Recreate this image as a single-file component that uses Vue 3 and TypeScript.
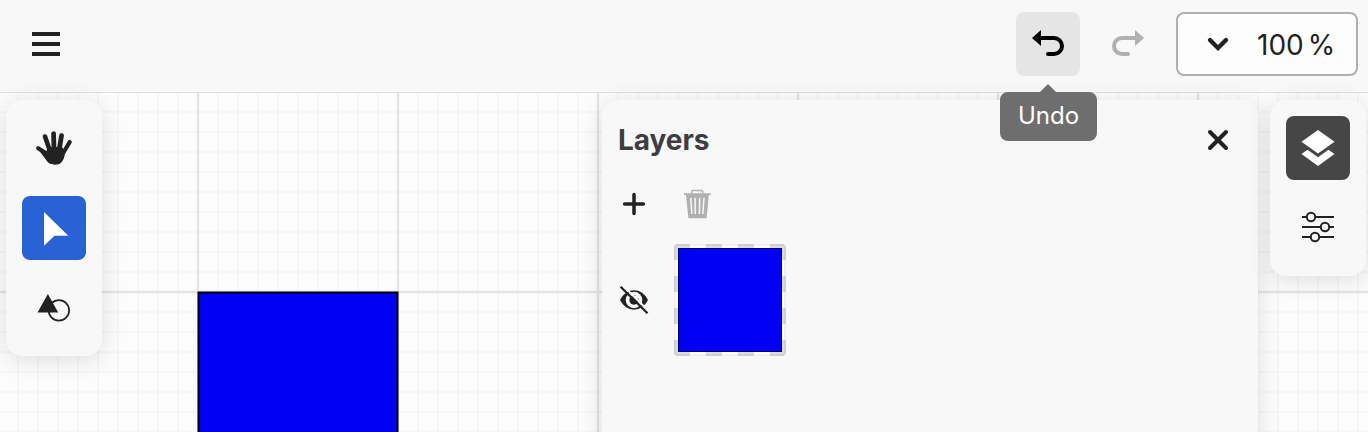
<script setup lang="ts">
import { ref } from 'vue'

const zoom = ref<number>(100)
const tool = ref<'hand' | 'select' | 'shape'>('select')
const panel = ref<'layers' | 'settings'>('layers')

const CANVAS = { top: 93, right: 1368, bottom: 432 }

/** Path data for every grid line at the given spacing, through (x0, y0). */
function gridPath(x0: number, y0: number, step: number): string {
  let d = ''
  for (let x = x0; x <= CANVAS.right; x += step) d += `M${x} ${CANVAS.top}V${CANVAS.bottom}`
  for (let y = y0; y <= CANVAS.bottom; y += step) d += `M0 ${y}H${CANVAS.right}`
  return d
}
const minor = gridPath(18, 112, 20)
const major = gridPath(198, 292, 200)
</script>

<template>
  <div class="app">
    <header class="topbar">
      <button class="btn" aria-label="Menu">
        <svg viewBox="0 0 64 64"><path d="M18 22h28M18 32h28M18 42h28" stroke="#222" stroke-width="4" /></svg>
      </button>
      <div class="actions">
        <div class="tip-anchor">
          <button class="btn hovered" aria-label="Undo action">
            <svg viewBox="0 0 64 64">
              <path d="M24 26H38a8 8 0 0 1 0 16H32" fill="none" stroke="#000" stroke-width="4" stroke-linecap="round" />
              <path d="M16 26L25 18V34Z" fill="#000" />
            </svg>
          </button>
          <div class="tooltip">Undo</div>
        </div>
        <button class="btn" aria-label="Redo action">
          <svg viewBox="0 0 64 64">
            <path d="M40 26H26a8 8 0 0 0 0 16H32" fill="none" stroke="#b0b0b0" stroke-width="4" stroke-linecap="round" />
            <path d="M48 26L39 18V34Z" fill="#b0b0b0" />
          </svg>
        </button>
        <div class="zoom">
          <svg class="chevron" viewBox="0 0 24 24">
            <path d="M4 8l8 8 8-8" fill="none" stroke="#222" stroke-width="4.400" stroke-linecap="round" />
          </svg>
          <span class="value">{{ zoom }}</span><span class="unit">%</span>
        </div>
      </div>
    </header>

    <main class="workspace">
      <svg class="canvas" width="1368" height="339" viewBox="0 93 1368 339">
        <rect y="93" width="1368" height="339" fill="#fcfcfc" />
        <path :d="minor" stroke="#f6f6f6" stroke-width="2" />
        <path :d="major" stroke="#e4e4e4" stroke-width="2.300" />
        <rect x="198.500" y="292.500" width="199" height="200" fill="#0000f5" stroke="#000" stroke-width="2" />
      </svg>

      <div class="overlay">
        <nav class="card tools">
          <button class="btn" :class="{ primary: tool === 'hand' }" aria-label="Hand tool">
            <svg viewBox="0 0 64 64">
              <g stroke="#222" stroke-linecap="round" fill="none">
                <path d="M16.200 32.300L26 38.500" stroke-width="4.200" />
                <path d="M23 20.500L28 35" stroke-width="4.600" />
                <path d="M31.600 17.600L32 33" stroke-width="4.800" />
                <path d="M39.500 19.600L37 35" stroke-width="4.800" />
                <path d="M47.700 26L40 39" stroke-width="4.200" />
              </g>
              <path d="M23.500 37L26 31H40L43 36C42 41 42.500 41.500 41 44C39.500 47 37.500 48.700 33 48.700C28.500 48.700 26.500 47 24.500 44.500L17.500 35Z" fill="#222" />
            </svg>
          </button>
          <button class="btn" :class="{ primary: tool === 'select' }" aria-label="Select tool">
            <svg viewBox="0 0 64 64"><path d="M22 16L46.300 39.800H32.500L22 49.800Z" fill="#fff" /></svg>
          </button>
          <button class="btn" :class="{ primary: tool === 'shape' }" aria-label="Shape tool">
            <svg viewBox="0 0 64 64">
              <circle cx="36.900" cy="34.400" r="10.200" fill="none" stroke="#222" stroke-width="1.700" />
              <path d="M25.900 18L36.200 36.500H15.500Z" fill="#222" />
            </svg>
          </button>
        </nav>

        <section class="card layers">
          <div class="layers-head">
            <h2>Layers</h2>
            <svg class="icon" viewBox="0 0 32 32">
              <path d="M8 8l16 16M24 8L8 24" stroke="#222" stroke-width="4" stroke-linecap="round" />
            </svg>
          </div>
          <div class="layers-tools">
            <svg class="icon" viewBox="0 0 32 32">
              <path d="M16 6.600V25.400M6.600 16H25.400" stroke="#222" stroke-width="3.500" stroke-linecap="round" />
            </svg>
            <svg class="icon" viewBox="0 0 32 32">
              <path d="M10.800 5.500V3.600Q10.800 2.500 12 2.500H20.500Q21.700 2.500 21.700 3.600V5.500" fill="none" stroke="#b0b0b0" stroke-width="1.500" />
              <path d="M3 5.200H29.700V6.900H27.800L25.600 30.200H7.400L5 6.900H3Z" fill="#b0b0b0" />
              <path d="M9.700 9.800L10.900 26M14 9.800L14.300 26M18.700 9.800L18.400 26M23 9.800L21.800 26" stroke="#f8f8f8" stroke-width="1.500" />
            </svg>
          </div>
          <div class="layer-row">
            <svg class="icon" viewBox="0 0 32 32">
              <path d="M2 16Q7 6.200 16 6.200T30 16Q25 25.700 16 25.700T2 16Z" fill="#222" />
              <ellipse cx="16" cy="16" rx="8.300" ry="8.200" fill="#f8f8f8" />
              <circle cx="16" cy="16" r="4.700" fill="#222" />
              <circle cx="18.300" cy="13.200" r="2" fill="#f8f8f8" />
              <path d="M4.500 1L31 27.500" stroke="#f8f8f8" stroke-width="2.200" />
              <path d="M2.600 2.800L29.500 29.300" stroke="#222" stroke-width="2.300" />
            </svg>
            <div class="thumb"><div class="fill"></div></div>
          </div>
        </section>

        <nav class="card panels">
          <button class="btn" :class="{ active: panel === 'layers' }" aria-label="Layers panel">
            <svg viewBox="0 0 64 64">
              <path d="M32 14L48.500 25.800L32 37.500L15.500 25.800Z" fill="#fff" />
              <path d="M15.500 38L21.500 33.800L32 41.300L42.500 33.800L48.500 38L32 50Z" fill="#fff" />
            </svg>
          </button>
          <button class="btn" :class="{ active: panel === 'settings' }" aria-label="Settings panel">
            <svg viewBox="0 0 64 64" stroke="#222" stroke-width="2">
              <path d="M16 21H48M16 31H48M16 41H48" />
              <g fill="#f8f8f8">
                <circle cx="25" cy="21" r="4.200" />
                <circle cx="39" cy="31" r="4.200" />
                <circle cx="29" cy="41" r="4.200" />
              </g>
            </svg>
          </button>
        </nav>
      </div>
    </main>
  </div>
</template>

<style>
body {
  margin: 0;
  overflow: hidden;
}
</style>

<style scoped>
.app {
  display: flex;
  flex-direction: column;
  width: 1368px;
  height: 432px;
  overflow: hidden;
  background: #f8f8f8;
  font-family: Inter, "Liberation Sans", sans-serif;
  color: #222;
}
.topbar {
  box-sizing: border-box;
  display: flex;
  flex: none;
  justify-content: space-between;
  height: 93px;
  padding: 12px 10px 0 14px;
  border-bottom: 1px solid #e0e0e0;
}
.btn {
  display: block;
  flex: none;
  width: 64px;
  height: 64px;
  padding: 0;
  border: 0;
  border-radius: 8px;
  background: transparent;
}
.btn svg {
  display: block;
  width: 64px;
  height: 64px;
}
.hovered { background: #e5e5e5; }
.primary { background: #2962d4; }
.active { background: #464646; }
.actions {
  display: flex;
  gap: 16px;
}
.tip-anchor { position: relative; }
.tooltip {
  position: absolute;
  z-index: 2;
  top: 80px;
  left: -16px;
  box-sizing: border-box;
  width: 97px;
  height: 49px;
  border-radius: 8px;
  background: #6e6e6e;
  color: #fff;
  font-size: 24px;
  line-height: 47px;
  text-align: center;
}
.tooltip::before {
  content: "";
  position: absolute;
  top: -8px;
  left: 40px;
  border: solid transparent;
  border-width: 0 8px 8px;
  border-bottom-color: #6e6e6e;
}
.zoom {
  box-sizing: border-box;
  display: flex;
  align-items: center;
  width: 182px;
  height: 64px;
  padding-left: 28px;
  border: 2px solid #b0b0b0;
  border-radius: 8px;
  background: #fdfdfd;
  font-size: 28px;
  line-height: 34px;
}
.chevron {
  width: 24px;
  height: 24px;
  margin-right: 27px;
}
.value,
.unit { padding-top: 1px; }
.unit { margin-left: 4px; }
.workspace {
  display: grid;
  flex: none;
  height: 339px;
}
.canvas,
.overlay { grid-area: 1 / 1; }
.canvas { display: block; }
.overlay {
  display: flex;
  align-items: flex-start;
  height: 332px;
  padding: 7px 2px 0 6px;
}
.card {
  box-sizing: border-box;
  border-radius: 16px;
  background: #f8f8f8;
  box-shadow: 0 4px 24px rgba(0, 0, 0, 0.12);
}
.tools,
.panels {
  display: flex;
  flex-direction: column;
  gap: 16px;
  width: 96px;
  padding: 16px;
}
.layers {
  width: 656px;
  height: 420px;
  margin: 0 12px 0 auto;
  padding: 24px 24px 0 16px;
}
.layers-head {
  display: flex;
  align-items: center;
  justify-content: space-between;
  height: 32px;
}
h2 {
  margin: 0;
  color: #3e3d45;
  font-size: 28px;
  font-weight: 700;
  letter-spacing: -0.05px;
  line-height: 32px;
}
.icon {
  display: block;
  flex: none;
  width: 32px;
  height: 32px;
}
.layers-tools {
  display: flex;
  gap: 31px;
  margin-top: 32px;
}
.layer-row {
  display: flex;
  align-items: center;
  gap: 24px;
  margin-top: 24px;
}
.thumb {
  position: relative;
  box-sizing: border-box;
  width: 112px;
  height: 112px;
  padding: 4px;
  border-radius: 4px;
  background: conic-gradient(#fff 25%, #dcdcdc 0 50%, #fff 0 75%, #dcdcdc 0) 0 0 / 32px 32px;
}
.thumb::after {
  content: "";
  position: absolute;
  inset: 0;
  border: 2px solid rgba(0, 0, 0, 0.06);
  border-radius: 4px;
}
.fill {
  box-sizing: border-box;
  height: 104px;
  border: 1px solid #00007c;
  background: #0000f5;
}
</style>
